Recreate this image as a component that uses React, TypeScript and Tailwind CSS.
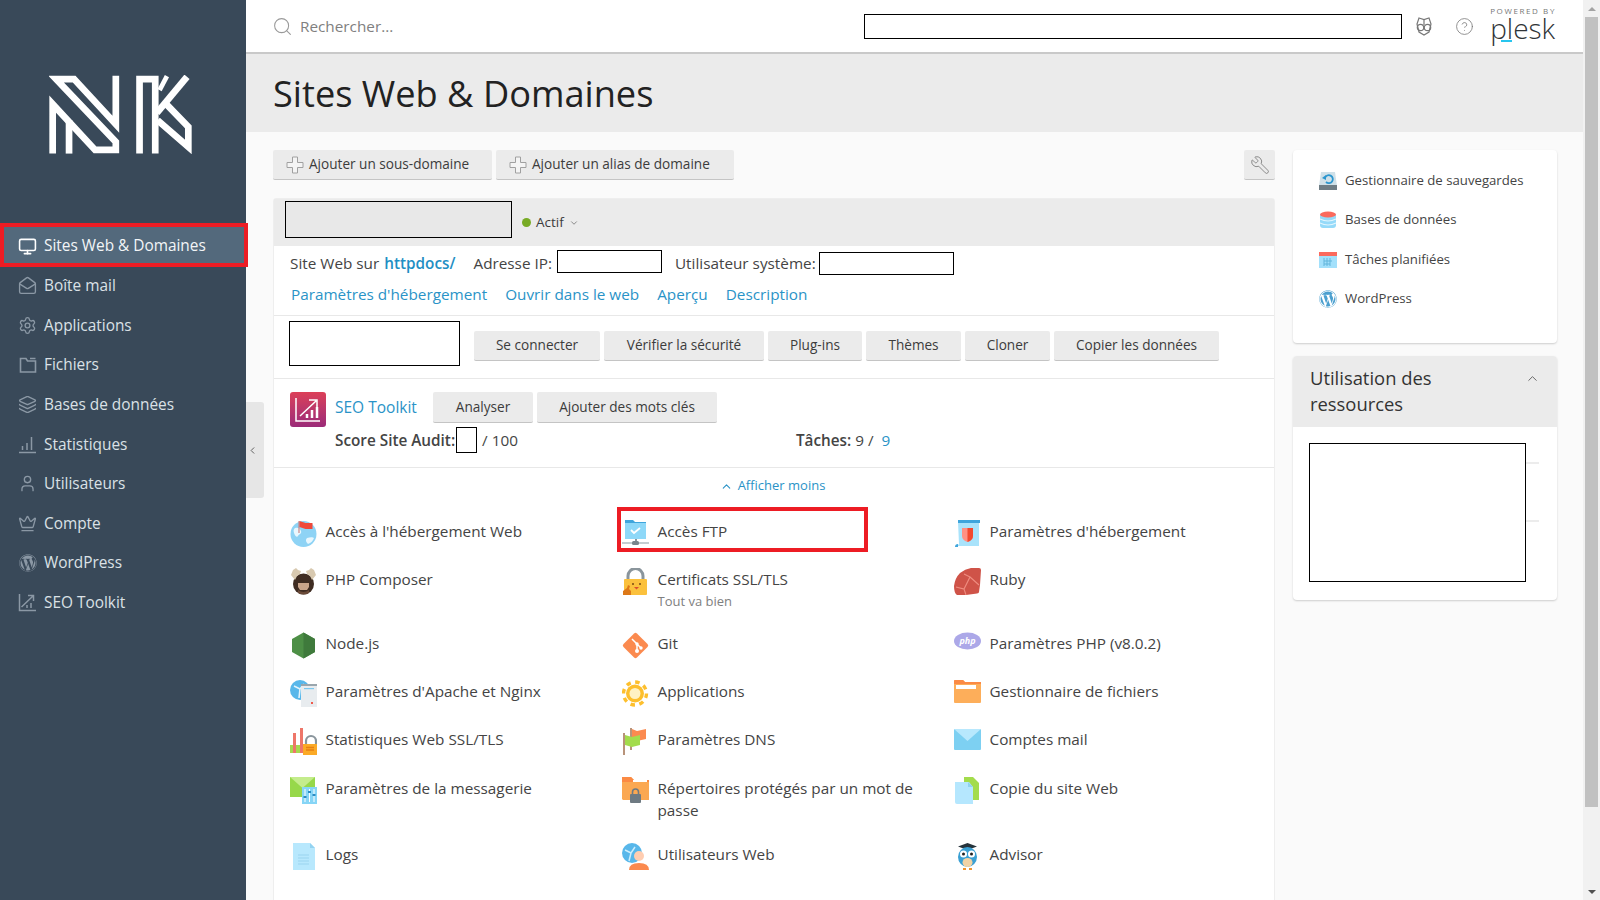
import React from 'react';
import { Monitor, MailOpen, Settings, Layers, User, Crown, ChevronLeft, ChevronDown, ChevronUp, Wrench, CircleHelp, Search } from 'lucide-react';
import { FaWordpress } from 'react-icons/fa';

const F = "font-['Open_Sans','Noto_Sans',sans-serif]";

const BarsIcon = () => (
  <svg width="19" height="19" viewBox="0 0 19 19" fill="none" stroke="currentColor" strokeWidth="1.5">
    <path d="M1 17.5h17M4.500 15v-4M9 15V8M13.500 15V2" />
  </svg>
);
const SeoIcon = () => (
  <svg width="19" height="19" viewBox="0 0 19 19" fill="none" stroke="currentColor" strokeWidth="1.5">
    <path d="M1.500 1v16.500H18M3.500 14L15 3M10 2.500h5.500V8M9 15v-3M13 15v-5" />
  </svg>
);
const FilesIcon = () => (
  <svg width="18" height="18" viewBox="0 0 18 18" fill="none" stroke="currentColor" strokeWidth="1.6">
    <path d="M1.500 2.500h5.500l1.500 2.500h8v11h-15zM11 2.500h5.500" />
  </svg>
);

const navItems = [
  { label: 'Boîte mail', icon: <MailOpen size={19} strokeWidth={1.7} /> },
  { label: 'Applications', icon: <Settings size={19} strokeWidth={1.7} /> },
  { label: 'Fichiers', icon: <FilesIcon /> },
  { label: 'Bases de données', icon: <Layers size={19} strokeWidth={1.7} /> },
  { label: 'Statistiques', icon: <BarsIcon /> },
  { label: 'Utilisateurs', icon: <User size={19} strokeWidth={1.7} /> },
  { label: 'Compte', icon: <Crown size={19} strokeWidth={1.7} /> },
  { label: 'WordPress', icon: <FaWordpress size={18} /> },
  { label: 'SEO Toolkit', icon: <SeoIcon /> },
];

const Logo = () => (
  <svg width="143" height="79" viewBox="147 225 428 236" fill="none" stroke="#fff" strokeWidth="20" strokeMiterlimit="8">
    <path d="M347 227V372L222 237H168L347 425V449H285L158 312V460" />
    <path d="M207 460V360" />
    <path d="M418 460V237H465V460" />
    <path d="M470 338L560 230" />
    <path d="M478 270L500 228" strokeWidth="14" />
    <path d="M498 312L564 380V440L472 360" />
  </svg>
);

const PlusOutline = () => (
  <svg width="18" height="18" viewBox="0 0 18 18" fill="#f4f4f4" stroke="#a0a0a0" strokeWidth="1" className="shrink-0">
    <path d="M6.500 1h5v5.500H17v5h-5.500V17h-5v-5.500H1v-5h5.500z" />
  </svg>
);

const I = ({ children }: { children: React.ReactNode }) => (
  <svg width="27" height="27" viewBox="0 0 27 27" className="shrink-0">{children}</svg>
);

const icons: Record<string, React.ReactNode> = {
  hosting: (
    <I>
      <circle cx="13.500" cy="14" r="13" fill="#8ed3f5" />
      <path d="M5 8c3-1 5 0 6 3s-2 3-3 5-3 0-4-3 0-4 1-5zM17 18c3-1 6-1 7 0-1 3-3 5-6 6-2-2-3-4-1-6z" fill="#e8f7fe" />
      <path d="M9 1v12" stroke="#c88" strokeWidth="1.200" />
      <path d="M9.500 1l6 2h7v6h-7l-6-2z" fill="#f0493a" />
    </I>
  ),
  composer: (
    <I>
      <ellipse cx="13.500" cy="16" rx="10.500" ry="10.500" fill="#3f2c22" />
      <path d="M1 7l2-5 3-2 2 2 3 1-1 3-3 2-2 4zM26 7l-2-5-3-2-2 2-3 1 1 3 3 2 2 4z" fill="#d8c9b0" />
      <path d="M8 15h11v4l-2 3h-7l-2-3z" fill="#c9a58a" />
      <path d="M8 22q5.500 4 11 0v3q-5.500 3-11 0z" fill="#6a4a38" />
    </I>
  ),
  node: (
    <I>
      <path d="M13.500 0.500L25 7v13l-11.500 6.500L2 20V7z" fill="#4d8f46" />
      <path d="M13.500 0.500L25 7v13l-11.500 6.500z" fill="#3f7a3c" />
    </I>
  ),
  apache: (
    <I>
      <circle cx="10" cy="10" r="10" fill="#58b7ea" />
      <path d="M4 6l6 3 4-5M10 9l-1 9" stroke="#e0f3fc" strokeWidth="1.600" fill="none" />
      <rect x="11" y="4" width="16" height="23" fill="#e8ecef" />
      <rect x="11" y="4" width="16" height="2" fill="#9aa6ad" />
      <rect x="14" y="8" width="10" height="1.200" fill="#7cc8ee" />
      <rect x="21" y="22" width="2" height="2" fill="#ef5a4c" />
    </I>
  ),
  stats: (
    <I>
      <rect x="0" y="17" width="18" height="8" fill="#a7d84f" />
      <rect x="3" y="5" width="3" height="20" fill="#ee7669" />
      <rect x="10" y="0" width="3" height="25" fill="#ee7669" />
      <path d="M16 16v-3a5 5 0 0110 0v3" fill="none" stroke="#8a959c" strokeWidth="2.200" />
      <rect x="13" y="16" width="14" height="11" fill="#fbaa26" />
      <path d="M16 19.500h8M16 22h8" stroke="#e77f12" strokeWidth="1.300" />
    </I>
  ),
  mailset: (
    <I>
      <rect x="0" y="0" width="25" height="20" fill="#97d84a" />
      <path d="M0 0l12.500 11L25 0z" fill="#c4ec8c" />
      <rect x="12" y="10" width="15" height="17" fill="#86d5f6" />
      <path d="M15 12v13M19.500 12v13M24 12v13" stroke="#fff" strokeWidth="1" />
      <path d="M13.500 20h3M18 15h3M22.500 18h3" stroke="#2a8cc4" strokeWidth="1.800" />
    </I>
  ),
  logs: (
    <I>
      <path d="M3 0h17l5 5v22H3z" fill="#b8e8fd" />
      <path d="M20 0l5 5h-5z" fill="#93d3f1" />
      <path d="M8 12h11M8 15h11M8 18h11M8 21h11" stroke="#9ad4ef" strokeWidth="1" />
    </I>
  ),
  ftp: (
    <I>
      <path d="M3 0h8l2 2h11v5H3z" fill="#3fa5dc" />
      <rect x="3" y="3" width="21" height="16" fill="#8ed8f8" />
      <path d="M9 10l3 3 6-5" stroke="#fff" strokeWidth="1.800" fill="none" />
      <path d="M0 23h27" stroke="#b5c0c6" strokeWidth="1.600" />
      <rect x="13" y="19" width="2" height="3" fill="#8a959c" />
      <rect x="10" y="21" width="7" height="4" rx="1.500" fill="#78848b" />
    </I>
  ),
  ssl: (
    <I>
      <path d="M6 13V8a7.500 7.500 0 0115 0v5" fill="none" stroke="#8a959c" strokeWidth="3" />
      <rect x="2" y="11" width="23" height="16" rx="1" fill="#fbc13d" />
      <circle cx="11" cy="16" r="1" fill="#7a4a12" />
      <circle cx="18" cy="16" r="1" fill="#7a4a12" />
      <path d="M12 19h5l-2.500 2.500z" fill="#d9502e" />
      <path d="M1 27v-4l4-3 1-3 2 1-1 3 2 2v4z" fill="#dd7818" />
    </I>
  ),
  git: (
    <I>
      <rect x="4" y="4" width="19" height="19" rx="2" transform="rotate(45 13.500 13.500)" fill="#fb8a4f" />
      <path d="M10 7l5 5v7M15 12l4 4" stroke="#fff" strokeWidth="1.500" fill="none" />
      <circle cx="15" cy="19" r="2" fill="#fff" />
      <circle cx="15" cy="12" r="1.700" fill="#fff" />
      <circle cx="19" cy="16" r="1.700" fill="#fff" />
    </I>
  ),
  apps: (
    <I>
      <circle cx="13" cy="13.500" r="11.500" fill="none" stroke="#fdbf2d" strokeWidth="3.400" strokeDasharray="4.500 4.500" />
      <circle cx="13" cy="13.500" r="9" fill="#fdbf2d" />
      <circle cx="13" cy="13.500" r="5.500" fill="#fff2c4" />
    </I>
  ),
  dns: (
    <I>
      <rect x="1" y="5" width="2" height="22" fill="#b8937a" />
      <rect x="8" y="0" width="2" height="22" fill="#b8937a" />
      <path d="M10 1l5 2 9-2v10l-9 2-5-2z" fill="#fb8a4f" />
      <path d="M3 7l7 2 8-2v10l-8 2-7-2z" fill="#a3dc4c" />
    </I>
  ),
  protect: (
    <I>
      <path d="M0 2q0-2 2-2h7l3 3h15v20q0 0-1 0H1l-1-1z" fill="#fba852" />
      <path d="M0 0h9l3 3h15v2H0z" fill="#fb8a44" />
      <path d="M11 3h14v2H11z" fill="#fff" />
      <path d="M10.500 17v-2a3 3 0 016 0v2" fill="none" stroke="#6e7a82" strokeWidth="1.600" />
      <rect x="8" y="17" width="11" height="9" rx="1" fill="#6e7a82" />
    </I>
  ),
  webusers: (
    <I>
      <circle cx="10" cy="10" r="10" fill="#58b7ea" />
      <path d="M3 7l6 3 4-6M9 10l-2 8" stroke="#cdeefc" strokeWidth="1.500" fill="none" />
      <circle cx="17" cy="13" r="5" fill="#ffcdb1" />
      <path d="M7 27q0-7 10-7t10 7z" fill="#fb8a4f" />
    </I>
  ),
  hostset: (
    <I>
      <path d="M4 2h21v24H3l2-2z" fill="#a9e3fb" />
      <rect x="4" y="0" width="22" height="3" fill="#3fa5dc" />
      <path d="M1 27q0-3 3-3v3z" fill="#3fa5dc" />
      <path d="M8 8h11v8q0 4-5.500 6Q8 20 8 16z" fill="#ff9184" />
      <path d="M13.500 8H19v8q0 4-5.500 6z" fill="#f2492f" />
    </I>
  ),
  ruby: (
    <I>
      <path d="M0 18Q1 10 6 5 11 1 17 0h8q2 0 2 2l-1 15-1 7q0 1-2 1.500L12 27H3q-3-2-3-9z" fill="#cf5348" />
      <path d="M2 19l8 2 6-12 9 8M10 21l2 6M16 9l-6-3" stroke="#ef8d80" strokeWidth="1.100" fill="none" />
    </I>
  ),
  php: (
    <svg width="27" height="18" viewBox="0 0 27 18" className="shrink-0">
      <ellipse cx="13.500" cy="9" rx="13.500" ry="8.500" fill="#aca8e8" />
      <text x="13.500" y="12" textAnchor="middle" fontSize="9" fontWeight="700" fontStyle="italic" fill="#fff" fontFamily="Open Sans">php</text>
    </svg>
  ),
  files: (
    <I>
      <path d="M0 1q0-1 1-1h8l2 2h15q1 0 1 1v19q0 1-1 1H1q-1 0-1-1z" fill="#fdae5a" />
      <path d="M0 1q0-1 1-1h8l2 2h16v2H0z" fill="#fb8a44" />
      <path d="M2 5h20v4H2z" fill="#fff" />
    </I>
  ),
  mail: (
    <I>
      <rect x="0" y="1" width="27" height="21" rx="1" fill="#7dd0f2" />
      <path d="M0 1h27L13.500 13z" fill="#b8e8fd" />
    </I>
  ),
  copy: (
    <I>
      <path d="M10 0h9l6 6v17H10z" fill="#a3dc4c" />
      <path d="M1 5h14l4 5v17H3q-2 0-2-2z" fill="#b5e7fe" />
      <path d="M14 5l5 5h-5z" fill="#8fd2ef" />
    </I>
  ),
  advisor: (
    <I>
      <path d="M13.500 0L23 3.500l-9.500 3.500L4 3.500z" fill="#26333b" />
      <ellipse cx="13.500" cy="14" rx="9.500" ry="10" fill="#3aa0d4" />
      <circle cx="9.500" cy="11" r="3.500" fill="#fff" />
      <circle cx="17.500" cy="11" r="3.500" fill="#fff" />
      <circle cx="9.500" cy="11" r="1.500" fill="#222" />
      <circle cx="17.500" cy="11" r="1.500" fill="#222" />
      <ellipse cx="13.500" cy="19.500" rx="5" ry="4.500" fill="#f1d3a6" />
      <path d="M9 25h3v2H9zM15 25h3v2h-3z" fill="#f0952f" />
    </I>
  ),
};

const tools: { label: string; icon: string; sub?: string; red?: boolean }[] = [
  { label: "Accès à l'hébergement Web", icon: 'hosting' },
  { label: 'Accès FTP', icon: 'ftp', red: true },
  { label: "Paramètres d'hébergement", icon: 'hostset' },
  { label: 'PHP Composer', icon: 'composer' },
  { label: 'Certificats SSL/TLS', icon: 'ssl', sub: 'Tout va bien' },
  { label: 'Ruby', icon: 'ruby' },
  { label: 'Node.js', icon: 'node' },
  { label: 'Git', icon: 'git' },
  { label: 'Paramètres PHP (v8.0.2)', icon: 'php' },
  { label: "Paramètres d'Apache et Nginx", icon: 'apache' },
  { label: 'Applications', icon: 'apps' },
  { label: 'Gestionnaire de fichiers', icon: 'files' },
  { label: 'Statistiques Web SSL/TLS', icon: 'stats' },
  { label: 'Paramètres DNS', icon: 'dns' },
  { label: 'Comptes mail', icon: 'mail' },
  { label: 'Paramètres de la messagerie', icon: 'mailset' },
  { label: 'Répertoires protégés par un mot de passe', icon: 'protect' },
  { label: 'Copie du site Web', icon: 'copy' },
  { label: 'Logs', icon: 'logs' },
  { label: 'Utilisateurs Web', icon: 'webusers' },
  { label: 'Advisor', icon: 'advisor' },
];

const Btn = ({ children, className = '' }: { children: React.ReactNode; className?: string }) => (
  <div className={`h-[30px] flex items-center justify-center bg-[#ebebeb] border-b border-[#c4c4c4] rounded-[2px] text-[13.600px] font-medium text-[#3c3c3c] ${className}`}>
    {children}
  </div>
);

const sideLinks = [
  {
    label: 'Gestionnaire de sauvegardes',
    icon: (
      <svg width="18" height="18" viewBox="0 0 18 18">
        <path d="M2 0h14l2 14H0z" fill="#cfe0e8" />
        <rect y="13" width="18" height="5" fill="#6f7d85" />
        <path d="M6 6a4 4 0 11 1 4" fill="none" stroke="#2a96cf" strokeWidth="1.800" />
        <path d="M3 6l4-3v5z" fill="#2a96cf" />
      </svg>
    ),
  },
  {
    label: 'Bases de données',
    icon: (
      <svg width="18" height="18" viewBox="0 0 18 18">
        <rect x="1" y="2" width="16" height="15" rx="3" fill="#96daf9" />
        <ellipse cx="9" cy="3.500" rx="8" ry="3" fill="#fb6a5d" />
        <path d="M1 8q8 4 16 0M1 12q8 4 16 0" stroke="#e4f6fe" strokeWidth="1.200" fill="none" />
      </svg>
    ),
  },
  {
    label: 'Tâches planifiées',
    icon: (
      <svg width="18" height="18" viewBox="0 0 18 18">
        <rect y="1" width="18" height="16" fill="#a3e0fb" />
        <rect y="1" width="18" height="4" fill="#fb6a5d" />
        <path d="M5 7v8M8 7v8M11 7v8M5 10h8M5 13h6" stroke="#63b5db" strokeWidth="1" />
      </svg>
    ),
  },
  { label: 'WordPress', icon: <FaWordpress size={18} className="text-[#4a9fcf]" /> },
];

export default function App() {
  return (
    <div className={`relative flex w-[1600px] h-[900px] overflow-hidden bg-[#fafafa] text-[15.300px] text-[#444] ${F}`}>
      {/* sidebar */}
      <aside className="w-[246px] shrink-0 bg-[#394959] text-[#dbe1e6] text-[15.400px]">
        <div className="h-[226px] pt-[75px] pl-[49px]">
          <Logo />
        </div>
        <div className="relative h-[40px] bg-[#53697c] pl-[18px] flex items-center gap-[7px] text-[#f2f5f7]">
          <Monitor size={19} strokeWidth={2} className="text-white" />
          <span>Sites Web &amp; Domaines</span>
          <div className="absolute left-0 top-[-3px] w-[248px] h-[44px] border-[4px] border-[#ed1c24]" />
        </div>
        {navItems.map(n => (
          <div key={n.label} className="h-[39.600px] pl-[18px] flex items-center gap-[7px]">
            <span className="w-[19px] flex justify-center text-[#8b98a5]">{n.icon}</span>
            <span>{n.label}</span>
          </div>
        ))}
      </aside>

      {/* collapse handle */}
      <div className="absolute left-[246px] top-[402px] w-[18px] h-[96px] bg-[#e6e6e6] rounded-r-[3px] flex items-center justify-start pl-[1px] text-[#555]">
        <ChevronLeft size={11} />
      </div>

      <main className="flex-1 min-w-0 flex flex-col">
        <header className="h-[54px] shrink-0 bg-white border-b-2 border-[#c9c9c9] flex items-center pl-[26px]">
          <Search size={21} strokeWidth={1.200} className="text-[#999] mr-[7px]" />
          <span className="text-[15.300px] text-[#808080]">Rechercher...</span>
          <div className="ml-[471px] w-[538px] h-[25px] border border-black bg-white" />
          <svg width="18" height="20" viewBox="0 0 18 20" fill="none" stroke="#777" strokeWidth="1.200" className="ml-[13px]">
            <path d="M4 2l5 1.500L14 2l2 6-2 8-5 3-5-3-2-8z" />
            <circle cx="5.500" cy="11.500" r="3.200" />
            <circle cx="12.500" cy="11.500" r="3.200" />
            <path d="M9 3.500V9" />
          </svg>
          <CircleHelp size={19} strokeWidth={1} className="ml-[22px] text-[#777]" />
          <div className="ml-[16px] mb-[5px] w-[64px] flex flex-col items-start">
            <span className="text-[8px] leading-[9px] tracking-[1.600px] text-[#777] whitespace-nowrap">POWERED BY</span>
            <span className="relative text-[28px] leading-[26px] font-light text-[#2f3437]">
              plesk
              <span className="absolute left-[11px] top-[25px] w-[11px] h-[2px] bg-[#28c5ee]" />
            </span>
          </div>
        </header>

        <div className="h-[78px] shrink-0 bg-[#ebebeb] pl-[27px] flex items-center">
          <h1 className="text-[36.200px] leading-none text-[#222] font-normal">Sites Web &amp; Domaines</h1>
        </div>

        <div className="flex-1 min-h-0 flex pl-[27px] pr-[26px] pt-[18px] gap-[18px]">
          <div className="w-[1002px] shrink-0">
            <div className="flex gap-[4px] h-[30px] mb-[18px]">
              <Btn className="w-[219px] !justify-start pl-[13px]">
                <span className="mr-[5px]"><PlusOutline /></span>
                Ajouter un sous-domaine
              </Btn>
              <Btn className="w-[238px] !justify-start pl-[13px]">
                <span className="mr-[5px]"><PlusOutline /></span>
                Ajouter un alias de domaine
              </Btn>
              <Btn className="w-[31px] ml-auto">
                <Wrench size={20} strokeWidth={1} className="text-[#777] -scale-x-100" />
              </Btn>
            </div>

            <section className="h-[720px] bg-white border border-[#eeeeee] rounded-t-[3px]">
              <div className="h-[47px] bg-[#ebebeb] pl-[11px] pt-[2px] flex items-start">
                <div className="w-[227px] h-[37px] bg-[#e8e8e8] border border-black" />
                <div className="h-[43px] ml-[10px] flex items-center gap-[5px] text-[13.500px] text-[#3c3c3c]">
                  <span className="w-[9px] h-[9px] rounded-full bg-[#78ab25]" />
                  Actif
                  <ChevronDown size={10} className="text-[#777]" />
                </div>
              </div>

              <div className="h-[70px] pl-[16px] border-b border-[#e8e8e8]">
                <div className="h-[35px] flex items-center">
                  <span>Site Web sur</span>
                  <span className="ml-[5px] font-semibold text-[#1f8fc4]">httpdocs/</span>
                  <span className="ml-[18px]">Adresse IP:</span>
                  <div className="ml-[5px] w-[105px] h-[23px] border border-black mb-[4px]" />
                  <span className="ml-[13px]">Utilisateur système:</span>
                  <div className="ml-[3px] w-[135px] h-[23px] border border-black" />
                </div>
                <div className="h-[27px] flex items-center gap-[18px] text-[#2a93c7] pl-[1px]">
                  <span>Paramètres d'hébergement</span>
                  <span>Ouvrir dans le web</span>
                  <span>Aperçu</span>
                  <span>Description</span>
                </div>
              </div>

              <div className="h-[63px] pl-[15px] pt-[5px] border-b border-[#e8e8e8] flex items-start">
                <div className="w-[171px] h-[45px] border border-black" />
                <div className="ml-[14px] mt-[10px] flex gap-[4px]">
                  <Btn className="w-[126px]">Se connecter</Btn>
                  <Btn className="w-[160px]">Vérifier la sécurité</Btn>
                  <Btn className="w-[94px]">Plug-ins</Btn>
                  <Btn className="w-[95px]">Thèmes</Btn>
                  <Btn className="w-[85px]">Cloner</Btn>
                  <Btn className="w-[165px]">Copier les données</Btn>
                </div>
              </div>

              <div className="h-[89px] pl-[16px] pt-[13px] border-b border-[#e8e8e8] flex items-start">
                <div className="w-[36px] h-[35px] rounded-[3px] bg-linear-to-b from-[#dc3f57] to-[#9b2a78] flex items-center justify-center">
                  <svg width="28" height="28" viewBox="0 0 28 28" fill="none" stroke="#fff" strokeWidth="1.500">
                    <path d="M2 2v23h24M6 20L22 5M15 4h8v8" />
                    <path d="M13 22v-4M18 22v-8M23 22V11" strokeWidth="2.500" />
                  </svg>
                </div>
                <div className="ml-[9px]">
                  <div className="h-[31px] flex items-center">
                    <span className="w-[98px] text-[#2a93c7] text-[15.500px]">SEO Toolkit</span>
                    <div className="flex gap-[4px]">
                      <Btn className="w-[100px] !h-[31px]">Analyser</Btn>
                      <Btn className="w-[180px] !h-[31px]">Ajouter des mots clés</Btn>
                    </div>
                  </div>
                  <div className="h-[28px] mt-[3px] flex items-center">
                    <span className="font-semibold text-[#444]">Score Site Audit:</span>
                    <div className="w-[21px] h-[26px] border border-black ml-[1px]" />
                    <span className="ml-[5px]">/ 100</span>
                    <span className="ml-[278px] font-semibold text-[#444]">Tâches:</span>
                    <span className="ml-[4px]">9 /</span>
                    <span className="ml-[8px] text-[#2a93c7]">9</span>
                  </div>
                </div>
              </div>

              <div className="h-[52px] pt-[8px] pr-[3px] flex items-start justify-center gap-[5px] text-[13px] text-[#2a93c7]">
                <ChevronUp size={13} className="mt-[4px]" />
                Afficher moins
              </div>

              <div className="pl-[16px] grid grid-cols-[332px_332px_332px] grid-rows-[48px_64px_48px_48px_49px_66px_48px]">
                {tools.map(t => (
                  <div key={t.label} className="relative flex items-start gap-[8.500px]">
                    <span className="w-[27px] shrink-0 flex justify-center">{icons[t.icon]}</span>
                    <div className="max-w-[270px] leading-[22px]">
                      <div>{t.label}</div>
                      {t.sub && <div className="text-[13px] text-[#808080]">{t.sub}</div>}
                    </div>
                    {t.red && <div className="absolute left-[-5px] top-[-13px] w-[251px] h-[45px] border-[4px] border-[#ed1c24]" />}
                  </div>
                ))}
              </div>
            </section>
          </div>

          <div className="w-[264px] shrink-0">
            <div className="h-[193px] bg-white rounded-[4px] shadow-[0_1px_2px_rgba(0,0,0,0.18)] pl-[26px] pt-[11px] mb-[13px]">
              {sideLinks.map(s => (
                <div key={s.label} className="h-[39.500px] flex items-center gap-[8px] text-[13.200px] text-[#444]">
                  {s.icon}
                  {s.label}
                </div>
              ))}
            </div>
            <div className="h-[244px] bg-white rounded-[4px] shadow-[0_1px_2px_rgba(0,0,0,0.18)] overflow-hidden">
              <div className="h-[71px] bg-[#ebebeb] pl-[17px] pr-[17px] pt-[9px] flex justify-between items-start">
                <h2 className="w-[180px] text-[18.400px] leading-[26px] text-[#333] font-normal">Utilisation des ressources</h2>
                <ChevronUp size={15} strokeWidth={1.400} className="text-[#555] mt-[6px]" />
              </div>
              <div className="pl-[16px] pt-[16px] flex items-start">
                <div className="w-[217px] h-[139px] border border-black" />
                <div className="w-[13px] pt-[19px]">
                  <div className="h-[2px] bg-[#ececec] mb-[56px]" />
                  <div className="h-[2px] bg-[#ececec]" />
                </div>
              </div>
            </div>
          </div>
        </div>
      </main>

      {/* scrollbar */}
      <div className="w-[17px] shrink-0 bg-[#f1f1f1] flex flex-col items-center">
        <div className="h-[17px] flex items-center justify-center">
          <div className="w-0 h-0 border-x-[4px] border-x-transparent border-b-[4px] border-b-[#a3a3a3]" />
        </div>
        <div className="w-[13px] h-[790px] bg-[#c1c1c1]" />
        <div className="mt-auto h-[17px] flex items-center justify-center">
          <div className="w-0 h-0 border-x-[4px] border-x-transparent border-t-[4px] border-t-[#505050]" />
        </div>
      </div>
    </div>
  );
}
